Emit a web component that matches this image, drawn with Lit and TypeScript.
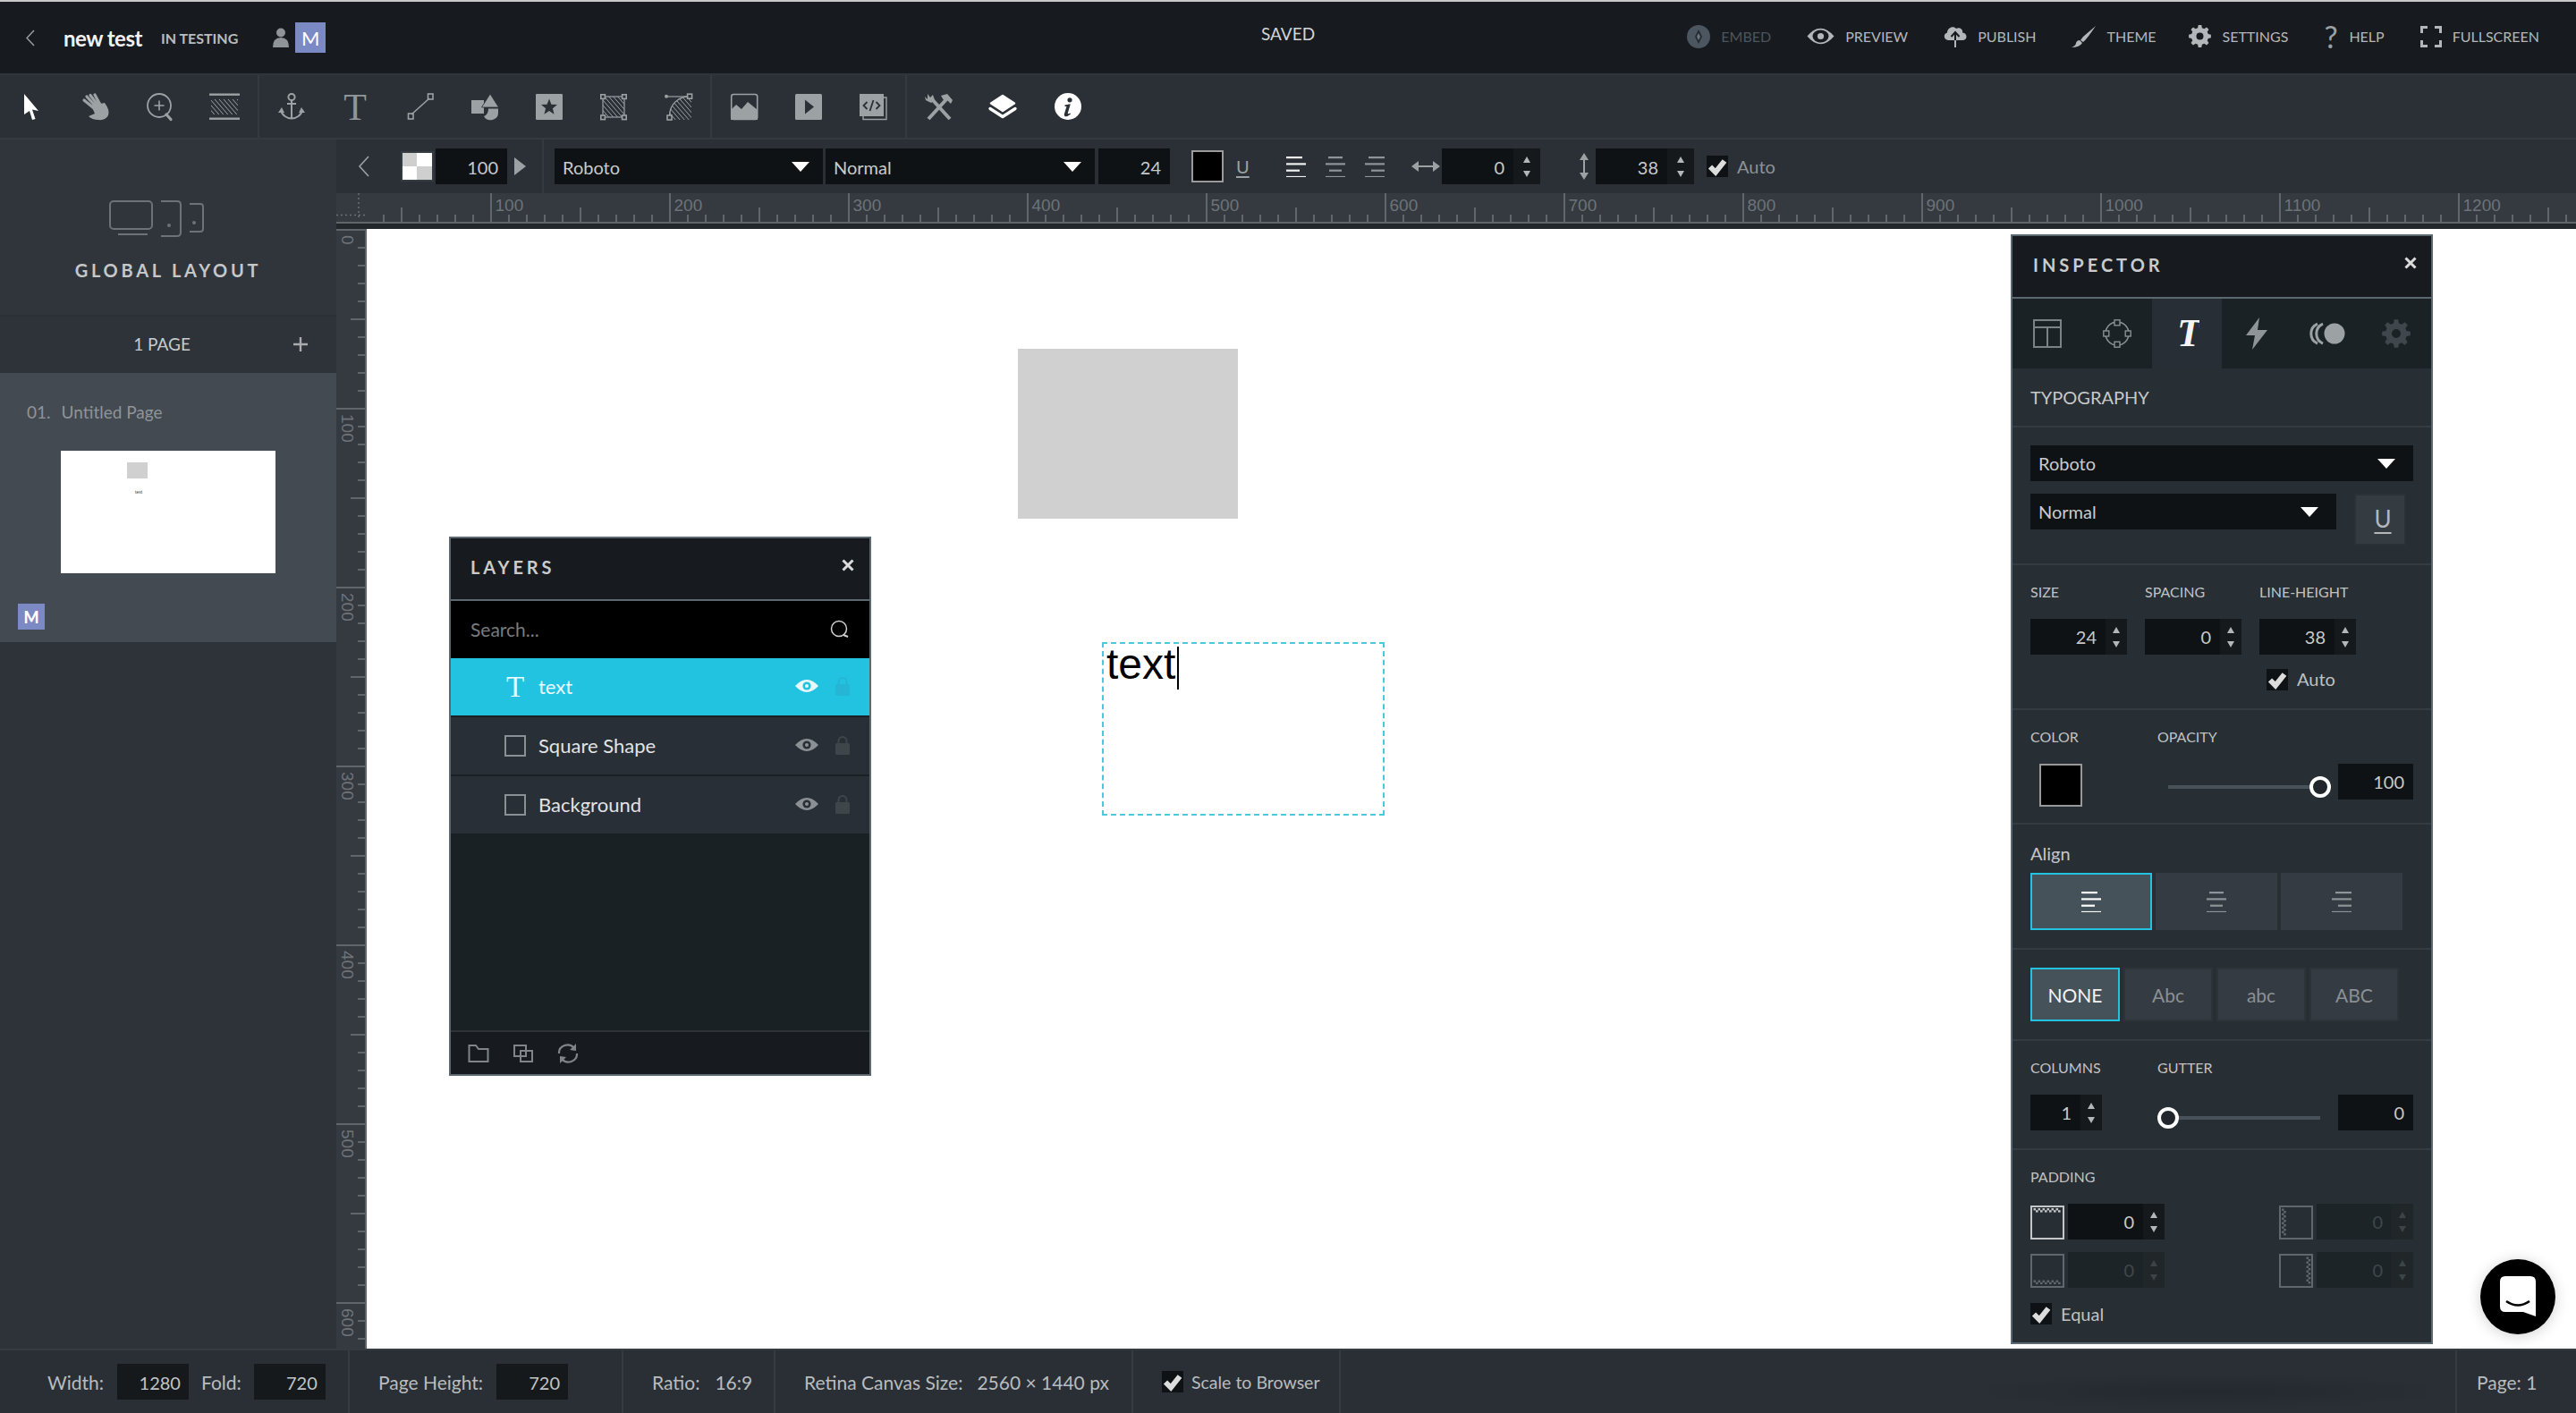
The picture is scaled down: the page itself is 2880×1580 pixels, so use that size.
import { LitElement, html, css, svg } from "lit";
import { customElement } from "lit/decorators.js";

const G = "#9ca1a4";
const DK = "#2a3036";

function gear(cx: number, cy: number, R: number, r: number, n: number, hole: number) {
  let d = "";
  const w = (Math.PI * 2) / n;
  for (let i = 0; i < n; i++) {
    const a = i * w;
    const pts: [number, number][] = [
      [a - w * 0.32, r],
      [a - w * 0.18, R],
      [a + w * 0.18, R],
      [a + w * 0.32, r],
    ];
    for (const [t, rad] of pts) {
      d += `${d ? "L" : "M"}${(cx + rad * Math.sin(t)).toFixed(2)} ${(cy - rad * Math.cos(t)).toFixed(2)}`;
    }
  }
  d += `Z M${cx + hole} ${cy} a${hole} ${hole} 0 1 0 ${-2 * hole} 0 a${hole} ${hole} 0 1 0 ${2 * hole} 0Z`;
  return d;
}

const hatch = (from: number, to: number, step: number, len: number, top: number) => {
  const out = [];
  for (let x = from; x <= to; x += step) {
    out.push(svg`<line x1=${x} y1=${top} x2=${x + len} y2=${top + len * 1.15} />`);
  }
  return out;
};

const toolIcons = [
  html`<svg class="ti" viewBox="0 0 36 32"><path d="M10 2 L26 21 L19 19.5 L22.5 30 L19 31 L16 21 L10 25Z" fill="#fff"/></svg>`,
  html`<svg class="ti" viewBox="0 0 36 32"><g stroke=${G} stroke-width="3.2" stroke-linecap="round" fill="none"><path d="M16 18 L5 9 M17 15 L8 5 M20 14 L12 3.5 M23 14 L17 3"/></g><path d="M13 15 L28 12 Q34 20 32 26 Q29 32 21 31 Q14 31 10 27 L17 24Z" fill=${G}/></svg>`,
  html`<svg class="ti" viewBox="0 0 36 32"><circle cx="17" cy="15" r="13" fill="none" stroke=${G} stroke-width="1.8"/><path d="M17 9.5 V20.5 M11.5 15 H22.5" stroke=${G} stroke-width="1.6"/><path d="M25 25 L30 30.5" stroke=${G} stroke-width="3.2" stroke-linecap="round"/></svg>`,
  html`<svg class="ti" viewBox="0 0 36 32"><rect x="1" y="1.5" width="34" height="2.4" fill=${G}/><rect x="1" y="28.5" width="34" height="2.4" fill=${G}/><g stroke=${G} stroke-width="1" clip-path="url(#hc1)">${hatch(-18, 32, 5, 18, 8)}</g><clipPath id="hc1"><rect x="3" y="8" width="30" height="17"/></clipPath></svg>`,
  html`<svg class="ti" viewBox="0 0 36 32"><g fill="none" stroke=${G} stroke-width="2"><circle cx="18" cy="5.5" r="3.6"/><path d="M18 9 V29.5 M13 13 H23"/><path d="M6 20 C7 26 13 29.5 18 29.5 C23 29.5 29 26 30 20"/></g><path d="M3 23 L7 17 L10 23Z M33 23 L29 17 L26 23Z" fill=${G}/></svg>`,
  html`<svg class="ti" viewBox="0 0 36 32"><text x="17" y="30.5" text-anchor="middle" font-family="'Liberation Serif',serif" font-size="42" fill="#90959a">T</text></svg>`,
  html`<svg class="ti" viewBox="0 0 36 32"><path d="M8 25 L28 7" stroke=${G} stroke-width="1.6"/><rect x="4.5" y="24" width="5.5" height="6" fill="none" stroke=${G} stroke-width="1.6"/><rect x="26.5" y="2" width="5.5" height="6" fill="none" stroke=${G} stroke-width="1.6"/></svg>`,
  html`<svg class="ti" viewBox="0 0 36 32"><rect x="3" y="9" width="14" height="15" fill=${G}/><path d="M15 18.5 H33 V23 A8.5 8 0 0 1 17 27 C20 26 22 23 22 18.5Z" fill=${G}/><path d="M24 2 L33.5 17 H14.5Z" fill=${G} stroke=${DK} stroke-width="0.8"/></svg>`,
  html`<svg class="ti" viewBox="0 0 36 32"><rect x="3" y="2" width="30" height="29" rx="1" fill=${G}/><path d="M18 7.5 L20.4 13.7 L27 14.1 L21.9 18.3 L23.6 24.7 L18 21.1 L12.4 24.7 L14.1 18.3 L9 14.1 L15.6 13.7Z" fill=${DK}/></svg>`,
  html`<svg class="ti" viewBox="0 0 36 32"><g stroke=${G} stroke-width="1" clip-path="url(#hc2)">${hatch(-20, 30, 5, 28, 2)}</g><clipPath id="hc2"><rect x="6" y="5" width="24" height="23"/></clipPath><rect x="6" y="5" width="24" height="23" fill="none" stroke=${G} stroke-width="1.2"/><g fill=${DK} stroke=${G} stroke-width="1.6"><rect x="3.8" y="2.8" width="4.6" height="4.6"/><rect x="27.6" y="2.8" width="4.6" height="4.6"/><rect x="3.8" y="26" width="4.6" height="4.6"/><rect x="27.6" y="26" width="4.6" height="4.6"/></g></svg>`,
  html`<svg class="ti" viewBox="0 0 36 32"><g stroke=${G} stroke-width="1" clip-path="url(#hc3)">${hatch(-10, 32, 5, 28, 2)}</g><clipPath id="hc3"><path d="M8 29 C8 14 18 5 33 5 V31 H8Z"/></clipPath><path d="M6 5 H30" stroke=${G} stroke-width="1.2"/><path d="M8.5 27 C8.5 14 18 5 30 5" fill="none" stroke=${G} stroke-width="1.4"/><circle cx="5" cy="4.8" r="2" fill=${G}/><g fill=${DK} stroke=${G} stroke-width="1.6"><rect x="28.6" y="2.2" width="5" height="5"/><rect x="6" y="26" width="5" height="5"/></g></svg>`,
  html`<svg class="ti" viewBox="0 0 36 32"><rect x="3.7" y="2.5" width="29" height="28" rx="2.5" fill="none" stroke=${G} stroke-width="1.6"/><path d="M3 31 V20 L9 14 L15 19 L22 11 L33 20 V31Z" fill=${G}/></svg>`,
  html`<svg class="ti" viewBox="0 0 36 32"><rect x="3" y="2" width="30" height="29" rx="1.5" fill=${G}/><path d="M14 8.5 L24 16.5 L14 24.5Z" fill=${DK}/></svg>`,
  html`<svg class="ti" viewBox="0 0 36 32"><path d="M30 6 H33 V30.5 H7 V27" fill="none" stroke=${G} stroke-width="1.4"/><rect x="3" y="2" width="27" height="25" fill=${G}/><path d="M11.5 11 L7.5 15 L11.5 19 M21.5 11 L25.5 15 L21.5 19 M18.5 9 L14.5 21" fill="none" stroke=${DK} stroke-width="1.8"/></svg>`,
  html`<svg class="ti" viewBox="0 0 36 32"><path d="M6 30 L28 6" stroke=${G} stroke-width="4"/><path d="M20 4 L27 2 L33 9 L31 13 L26 8 L23 9Z" fill=${G}/><path d="M30 30 L10 8" stroke=${G} stroke-width="4"/><path d="M5 2 L8 6 L11 3 L13 9 L9 12 L3 9 L2 5 L5 8Z" fill=${G}/></svg>`,
  html`<svg class="ti" viewBox="0 0 36 32"><path d="M17 4 L30 12.5 L17 21 L4 12.5Z" fill="#fff" stroke="#fff" stroke-width="2.5" stroke-linejoin="round"/><path d="M3 18.5 L17 27.5 L31 18.5" fill="none" stroke="#fff" stroke-width="3.4" stroke-linejoin="round" stroke-linecap="round"/></svg>`,
  html`<svg class="ti" viewBox="0 0 36 32"><circle cx="18" cy="16" r="15" fill="#fff"/><circle cx="20" cy="8.8" r="2.6" fill=${DK}/><path d="M14.5 14.5 L20.8 13.2 L17.8 23.5 Q17.5 25 20.5 23.4 L21 24.5 Q17 28 14.5 27 Q13.2 26 14 24 L16.5 16 L14.5 16Z" fill=${DK}/></svg>`,
];

const alignIcon = (kind: string, color: string) => {
  const rows: [number, number][] =
    kind === "l"
      ? [[0, 18], [0, 22], [0, 15], [0, 22]]
      : kind === "c"
        ? [[3, 16], [0, 22], [4, 14], [0, 22]]
        : [[4, 18], [0, 22], [7, 15], [0, 22]];
  return html`<svg class="align" viewBox="0 0 22 24">${rows.map(
    ([x, w], i) => svg`<rect x=${x} y=${1 + i * 7.3} width=${w} height="2.2" fill=${color} />`,
  )}</svg>`;
};

const caret = html`<svg class="caret" viewBox="0 0 20 11"><path d="M0 0 H20 L10 11Z" fill="#fff"/></svg>`;
const checkMark = html`<svg viewBox="0 0 24 24"><path d="M4 12.5 L10 18.5 L20 6" fill="none" stroke="#dcdcdc" stroke-width="6"/></svg>`;
const check = html`<span class="chk">${checkMark}</span>`;

const eye = (c: string, pupil: string) =>
  html`<svg class="eye" viewBox="0 0 26 16"><path d="M0 8 Q13 -6 26 8 Q13 22 0 8Z" fill=${c}/><circle cx="13" cy="8" r="4.6" fill=${pupil}/><circle cx="13" cy="8" r="2" fill=${c}/></svg>`;
const lock = (c: string) =>
  html`<svg class="lock" viewBox="0 0 16 22"><path d="M3.5 10 V6.5 A4.5 4.5 0 0 1 12.5 6.5 V10" fill="none" stroke=${c} stroke-width="2"/><rect x="0" y="9" width="16" height="13" rx="1.5" fill=${c}/></svg>`;

const num = (v: string, cls: string, spin = true) =>
  html`<div class="num ${cls}"><span class="val">${v}</span>${spin
    ? html`<span class="spin"><i class="up"></i><i class="dn"></i></span>`
    : ""}</div>`;

const padIcon = (side: string, dim: boolean) => {
  const c = dim ? "#60686e" : "#c4c6c8";
  const cells = [];
  for (let i = 0; i < 6; i++) {
    const a = 3.5 + i * 5;
    const pos = (k: number) =>
      side === "t"
        ? [a + (k % 2) * 2.5, 3 + k * 2.2]
        : side === "b"
          ? [a + (k % 2) * 2.5, 29.5 + k * 2.2]
          : side === "l"
            ? [3 + k * 2.2, a + (k % 2) * 2.5]
            : [30.5 + k * 2.2, a + (k % 2) * 2.5];
    for (let k = 0; k < 2; k++) {
      const [x, y] = pos(k);
      cells.push(svg`<rect x=${x} y=${y} width="2.6" height="2.4" fill=${c} />`);
    }
  }
  return html`<svg class="padi" viewBox="0 0 38 38"><rect x="1" y="1" width="36" height="36" fill="none" stroke=${c} stroke-width="2"/>${cells}</svg>`;
};

const topRuler = () => {
  const out = [];
  for (let i = 4; i < 128; i++) {
    const x = 349 - 410 + i * 20;
    const top = i % 10 === 0 ? 0 : i % 5 === 0 ? 16 : 24;
    out.push(svg`<line x1=${x} x2=${x} y1=${top} y2="32" />`);
    if (i % 10 === 0) {
      out.push(svg`<text class="rt" x=${x + 4.5} y="20">${i * 10}</text>`);
    }
  }
  return out;
};
const leftRuler = () => {
  const out = [];
  for (let i = 0; i < 63; i++) {
    const y = 1 + i * 20;
    const l = i % 10 === 0 ? 0 : i % 5 === 0 ? 16 : 24;
    out.push(svg`<line x1=${l} x2="32" y1=${y} y2=${y} />`);
    if (i % 10 === 0) {
      out.push(svg`<text class="rt" transform="translate(6,${y + 6}) rotate(90)">${i * 10}</text>`);
    }
  }
  return out;
};

@customElement("app-root")
export class AppRoot extends LitElement {
  static styles = css`
    :host { display: block; width: 2880px; height: 1580px; overflow: hidden; font-family: Lato, "Noto Sans", sans-serif; color: #c6c8c9; }
    * { box-sizing: border-box; }
    .app { display: flex; flex-direction: column; height: 1580px; background: #2a3036; }
    .topline { height: 2px; background: #c9c9c9; }
    .topbar { height: 82px; border-bottom: 2px solid #2e353a; background: #171b1f; display: grid; grid-template-columns: 1fr auto 1fr; align-items: center; }
    .tl { display: flex; align-items: center; padding-left: 28px; }
    .tl .back { width: 11px; height: 19px; margin-right: 32px; }
    .title { font-size: 24px; font-weight: 700; color: #f2f2f2; letter-spacing: -0.5px; }
    .status { font-size: 16px; font-weight: 700; color: #b9bcbe; margin-left: 21px; letter-spacing: 0; }
    .person { width: 18px; height: 22px; margin-left: 39px; }
    .mbadge { width: 34px; height: 34px; margin-left: 7px; background: #7b89c4; color: #fff; display: flex; align-items: center; justify-content: center; font-size: 22px; font-weight: 400; }
    .saved { font-size: 19px; color: #d2d4d5; padding-bottom: 10px; }
    .tr { display: flex; justify-content: flex-end; align-items: center; gap: 40px; padding: 0 41px 3px 0; }
    .act { display: flex; align-items: center; gap: 12px; font-size: 16px; color: #b4b7b9; white-space: nowrap; }
    .act.off { color: #4c555c; }
    .act svg { display: block; }
    .act.th { margin-right: -3px; }
    .qm { font-size: 34px; line-height: 26px; color: #9ca1a4; width: 16px; }

    .toolbar { height: 72px; border-bottom: 2px solid #333a40; display: flex; background: #2a3036; }
    .tg { display: flex; align-items: center; border-right: 2px solid #333a40; flex: none; }
    .tg1 { width: 290px; }
    .tg1 .tb:first-child { margin-left: -1px; }
    .tg2 { width: 506px; }
    .tg3 { width: 218px; }
    .tg4 { border-right: 0; }
    .tb { width: 72px; display: flex; justify-content: center; flex: none; }
    .ti { width: 36px; height: 32px; display: block; overflow: visible; }

    .main { flex: 1; display: flex; min-height: 0; }
    .side { width: 376px; flex: none; background: #2d3339; display: flex; flex-direction: column; }
    .gl { height: 198px; background: #2f353b; border-bottom: 2px solid #2a3036; display: flex; flex-direction: column; align-items: center; padding-top: 68px; }
    .devices { width: 106px; height: 42px; display: block; margin-right: 26px; }
    .gl h2 { margin: 24px 0 0; font-size: 20px; line-height: 24px; font-weight: 700; letter-spacing: 3.75px; color: #c5c7c8; }
    .pg { height: 63px; display: flex; align-items: center; justify-content: center; position: relative; font-size: 19px; color: #c8cacb; padding-right: 14px; padding-bottom: 2px; }
    .pg .plus { position: absolute; left: 328px; top: 23px; width: 16px; height: 16px; }
    .page { height: 301px; background: #434a52; padding: 29px 0 0 30px; display: flex; flex-direction: column; }
    .page .nm { font-size: 19px; line-height: 30px; color: #8f9498; display: flex; gap: 12px; }
    .thumb { width: 240px; height: 137px; background: #fff; margin: 28px 0 0 38px; position: relative; color: #333; flex: none; }
    .thumb b { position: absolute; left: 74px; top: 13px; width: 23px; height: 18px; background: #d0d0d0; }
    .thumb span { position: absolute; left: 83px; top: 43px; font: 5px/6px "Liberation Sans", sans-serif; }
    .mb2 { width: 30px; height: 29px; background: #7b89c4; color: #fff; font-size: 18px; font-weight: 900; display: flex; align-items: center; justify-content: center; margin: 34px 0 0 -10px; flex: none; }

    .work { flex: 1; min-width: 0; display: flex; flex-direction: column; }
    .fbar { height: 60px; background: #2a3036; display: flex; align-items: center; flex: none; }
    .fleft { width: 232px; height: 60px; border-right: 2px solid #333a40; display: flex; align-items: center; flex: none; }
    .chev { width: 13px; height: 24px; margin-left: 24px; }
    .chq { width: 37px; height: 34px; margin-left: 35px; display: block; }
    .num { height: 40px; background: #0e1214; display: flex; font-size: 20px; color: #c8c9ca; flex: none; }
    .val { flex: 1; text-align: right; padding-right: 10px; line-height: 42px; }
    .insp .val { line-height: 40px; }
    .spin { width: 24px; background: #15191c; display: flex; flex-direction: column; align-items: center; justify-content: center; gap: 9px; flex: none; }
    .spin i { display: block; width: 0; height: 0; border-left: 4.5px solid transparent; border-right: 4.5px solid transparent; }
    .spin .up { border-bottom: 7px solid #b4b7b9; }
    .spin .dn { border-top: 7px solid #b4b7b9; }
    .w80 { width: 80px; margin-left: 2px; }
    .w110 { width: 110px; }
    .w110 .spin { width: 30px; }
    .w80b { width: 80px; margin-left: 4px; }
    .rarrow { width: 13px; height: 20px; margin-left: 8px; }
    .sel { height: 40px; background: #0e1214; display: flex; align-items: center; justify-content: space-between; font-size: 20px; color: #c9cacb; flex: none; padding: 2px 15px 0 9px; }
    .sel1 { width: 300px; margin-left: 12px; }
    .sel2 { width: 301px; margin-left: 3px; }
    .caret { width: 20px; height: 11px; display: block; margin-top: -2px; }
    .fsw { width: 36px; height: 36px; background: #000; border: 2px solid #9a9a9a; margin-left: 24px; flex: none; }
    .u { font-size: 20px; line-height: 28px; color: #9ca1a4; text-decoration: underline; margin-left: 14px; text-underline-offset: 3px; flex: none; min-width: 16px; }
    .align { width: 22px; height: 24px; display: block; flex: none; }
    .ga1 { margin-left: 40px; }
    .ga2 { margin-left: 22px; }
    .ga3 { margin-left: 22px; }
    .hw { width: 32px; height: 14px; margin-left: 30px; flex: none; }
    .w110h { margin-left: 2px; }
    .vh { width: 14px; height: 30px; margin-left: 42px; flex: none; }
    .w110v { margin-left: 6px; }
    .chk { width: 24px; height: 24px; background: #0e1214; display: block; flex: none; }
    .chk svg { display: block; width: 24px; height: 24px; }
    .fchk { margin-left: 14px; }
    .fauto { font-size: 20px; color: #8d9296; margin-left: 10px; }

    .rrow { height: 40px; display: flex; flex: none; position: relative; }
    .rcorner { width: 34px; background: #343a40; flex: none; border-bottom: 6px solid #22272b; }
    .rcorner svg { display: block; }
    .rtop { flex: 1; height: 40px; background: #343a40; overflow: hidden; border-bottom: 6px solid #22272b; }
    .rtop svg { display: block; width: 2470px; height: 34px; border-bottom: 2px solid #5f656a; }
    .ruler { stroke: #70767b; stroke-width: 1.5; }
    .rt { font: 19px "Liberation Sans", sans-serif; fill: #6d7378; stroke: none; }
    .crow { flex: 1; display: flex; min-height: 0; }
    .rleft { width: 34px; background: #343a40; flex: none; border-right: 2px solid #5f656a; overflow: hidden; }
    .rleft svg { display: block; width: 32px; height: 1260px; }
    .canvas { flex: 1; background: #fff; position: relative; overflow: hidden; min-width: 0; }
    .shape { position: absolute; left: 728px; top: 134px; width: 246px; height: 190px; background: #d0d0d0; }
    .tbox { position: absolute; left: 822px; top: 462px; width: 316px; height: 194px; border: 2px dashed #4bc8dc; padding: 3px 0 0 3px; color: #000; }
    .tbox span { display: block; width: fit-content; border-right: 2.5px solid #000; height: 48px; font: 48px/40px "Liberation Sans", sans-serif; padding-right: 2px; }

    .panel { position: absolute; border: 2px solid #5b6870; display: flex; flex-direction: column; background: #272e34; }
    .layers { left: 92px; top: 344px; width: 472px; height: 603px; background: #1a2124; }
    .phead { height: 70px; background: #171b1f; border-bottom: 2px solid #5b6870; display: flex; align-items: center; justify-content: space-between; font-weight: 700; color: #c9cbcc; flex: none; }
    .layers .phead { padding: 0 17px 4px 22px; font-size: 20px; letter-spacing: 3.9px; }
    .x { width: 14px; height: 14px; display: block; margin-bottom: 4px; }
    .sr { height: 64px; background: #000; display: flex; align-items: center; justify-content: space-between; padding: 0 22px; font-size: 21px; color: #777b7e; flex: none; }
    .sr span { padding-bottom: 2px; }
    .sr svg { width: 22px; height: 22px; display: block; }
    .lr { height: 64px; background: #292f37; display: flex; align-items: center; margin-bottom: 2px; font-size: 22px; color: #e2e3e4; flex: none; }
    .lr.on { background: #21c3e0; color: #eefafd; }
    .lr .ic { width: 24px; height: 24px; margin-left: 60px; display: flex; flex: none; }
    .lr .ic svg { display: block; width: 24px; height: 24px; }
    .lr .tx { margin-left: 14px; flex: 1; padding-bottom: 2px; }
    .eye { width: 26px; height: 16px; margin-right: 19px; flex: none; display: block; margin-bottom: 2px; }
    .lock { width: 16px; height: 22px; margin-right: 22px; flex: none; display: block; margin-bottom: 2px; }
    .lsp { flex: 1; }
    .lf { height: 49px; background: #171b1f; border-top: 2px solid #2d3338; display: flex; align-items: center; padding: 0 0 0 19px; flex: none; gap: 26px; }
    .lf svg { display: block; height: 22px; width: 24px; }

    .insp { left: 1838px; top: 6px; width: 472px; height: 1241px; }
    .insp .phead { padding: 0 16px 4px 23px; font-size: 20px; letter-spacing: 4px; }
    .tabs { height: 78px; display: grid; grid-template-columns: repeat(6, 78px); background: #1a2225; flex: none; }
    .tab { display: flex; align-items: center; justify-content: center; }
    .tab.on { background: #272e35; }
    .tab svg { display: block; }
    .sec { border-bottom: 2px solid #343b42; padding: 20px 0 20px 20px; flex: none; }
    .sec.last { border-bottom: 0; flex: 1; }
    .typo { height: 66px; font-size: 20px; padding: 19px 0 0 20px; line-height: 26px; color: #c6c8c9; }
    .isel1 { width: 428px; }
    .isel2 { width: 342px; }
    .irow { display: flex; margin-top: 14px; align-items: flex-start; }
    .sel.is { padding: 0 20px 0 9px; }
    .sel.is .caret { margin-top: 0; }
    .ub { width: 58px; height: 58px; margin-left: 20px; background: #343b41; border: 2px solid #2b3136; font-size: 26px; text-align: center; color: #b4b7b9; text-decoration: underline; text-decoration-thickness: 2px; text-underline-offset: 5px; padding: 6px 0 0 6px; line-height: 40px; }
    .lab3 { display: grid; grid-template-columns: 108px 108px 108px; column-gap: 20px; font-size: 16px; line-height: 20px; color: #c0c2c4; }
    .g3 { margin-top: 20px; display: grid; grid-template-columns: 108px 108px 108px; column-gap: 20px; }
    .auto { display: flex; align-items: center; height: 24px; margin: 16px 0 0 264px; gap: 10px; font-size: 20px; color: #bfc1c3; }
    .auto span:last-child { line-height: 20px; padding-bottom: 2px; }
    .lab2 { display: grid; grid-template-columns: 142px 1fr; font-size: 16px; line-height: 20px; color: #c0c2c4; }
    .srow { margin-top: 20px; display: flex; align-items: flex-start; }
    .srow.tall { height: 46px; }
    .swatch { width: 48px; height: 48px; background: #000; border: 2px solid #999; margin-left: 10px; flex: none; }
    .slider { width: 194px; margin-left: 84px; height: 40px; position: relative; flex: none; }
    .sl2 { margin-left: 62px; }
    .track { position: absolute; left: 12px; width: 170px; top: 24px; height: 4px; background: #47525a; }
    .knob { position: absolute; top: 14px; width: 24px; height: 24px; border-radius: 50%; background: #20262b; border: 4.5px solid #fff; }
    .kr { left: 170px; }
    .kl { left: 0; }
    .w84r { width: 84px; margin-left: 8px; }
    .alab { font-size: 20px; line-height: 24px; color: #c4c6c8; }
    .abtns { display: flex; gap: 4px; margin-top: 10px; }
    .abtn { width: 136px; height: 64px; background: #343b42; display: flex; align-items: center; justify-content: center; }
    .abtn.on { background: #46525a; border: 2px solid #21c3e0; }
    .cbtns { display: flex; gap: 4px; }
    .cb { width: 100px; height: 60px; background: #343b42; border: 2px solid #2e3339; display: flex; align-items: center; justify-content: center; font-size: 21px; color: #8b9094; padding-top: 1px; }
    .cb.on { background: #46525a; border: 2px solid #21c3e0; color: #f2f3f3; }
    .w80c { width: 80px; }
    .prow { display: flex; align-items: center; margin-top: 14px; height: 40px; }
    .prow.first { margin-top: 20px; }
    .padi { width: 38px; height: 38px; display: block; flex: none; margin-top: 2px; }
    .pnum { width: 108px; margin-left: 4px; }
    .pnum2 { margin-left: 128px; }
    .num.dim { background: #1d2427; color: #3f474c; }
    .dim .spin { background: #212729; }
    .dim .spin .up { border-bottom-color: #3c4448; }
    .dim .spin .dn { border-top-color: #3c4448; }
    .eq { display: flex; align-items: center; gap: 10px; margin-top: 17px; font-size: 20px; color: #bfc1c3; }

    .chat { position: absolute; left: 2363px; top: 1152px; width: 84px; height: 84px; border-radius: 50%; background: #000; box-shadow: 0 2px 16px rgba(0,0,0,.18); }
    .chat svg { display: block; }

    .bbar { height: 72px; border-top: 2px solid #343b41; background: #292f35 radial-gradient(ellipse 280px 20px at 2470px 46px, rgba(20,24,26,.28), transparent); display: flex; flex: none; font-size: 21px; color: #b9bcbe; align-items: stretch; }
    .bs { display: flex; align-items: center; border-right: 2px solid #343b41; flex: none; white-space: nowrap; }
    .bs1 { width: 391px; padding-left: 53px; }
    .bs2 { width: 306px; padding-left: 32px; }
    .bs3 { width: 170px; padding-left: 32px; }
    .bs4 { width: 400px; padding-left: 32px; }
    .bs5 { width: 232px; padding-left: 32px; }
    .bsp { flex: 1; }
    .bs6 { width: 135px; border-right: 0; border-left: 2px solid #343b41; padding-left: 22px; }
    .bi { width: 80px; height: 40px; background: #15191c; text-align: right; padding-right: 9px; line-height: 42px; font-size: 20px; color: #c2c4c5; flex: none; }
    .bi1 { margin-left: 15px; }
    .bi2 { margin-left: 14px; }
    .bi3 { margin-left: 15px; }
    .fl { margin-left: 14px; }
    .rv { margin-left: 17px; }
    .rc { margin-left: 16px; }
    .stb { margin-left: 9px; font-size: 19.5px; }
  `;

  render() {
    return html`<div class="app">
      <div class="topline"></div>
      <div class="topbar">
        <div class="tl">
          <svg class="back" viewBox="0 0 11 19"><path d="M10 1 L2 9.5 L10 18" fill="none" stroke="#9ca1a4" stroke-width="1.4"/></svg>
          <span class="title">new test</span>
          <span class="status">IN TESTING</span>
          <svg class="person" viewBox="0 0 18 22"><circle cx="9" cy="5.5" r="5" fill="#8f9498"/><path d="M0 22 Q0 11 9 11 Q18 11 18 22Z" fill="#8f9498"/></svg>
          <span class="mbadge">M</span>
        </div>
        <div class="saved">SAVED</div>
        <div class="tr">
          <div class="act off">
            <svg width="26" height="26" viewBox="0 0 26 26"><circle cx="13" cy="13" r="13" fill="#4b5660"/><path d="M13 5 L17 13 L13 21 L9 13Z" fill="#242a30"/><path d="M13 9 L15 13 L13 17 L11 13Z" fill="#6a7680"/></svg>
            <span>EMBED</span>
          </div>
          <div class="act">
            <svg width="31" height="21" viewBox="0 0 31 21"><path d="M0.5 10.5 Q15.5 -7 30.5 10.5 Q15.5 28 0.5 10.5Z" fill="#b4b7b9"/><ellipse cx="15.5" cy="10.5" rx="9" ry="7" fill="#171b1f"/><circle cx="15.5" cy="10.5" r="3.6" fill="#b4b7b9"/></svg>
            <span>PREVIEW</span>
          </div>
          <div class="act">
            <svg width="26" height="25" viewBox="0 0 26 25"><path d="M6 17 C0 17 -1 10 4 8.5 C4 3 11 0 14 4 C18 2 22 5 21 8.5 C27 9 27 17 21 17Z" fill="#b4b7b9"/><path d="M13 25 V9 M8.5 13 L13 8 L17.5 13" fill="none" stroke="#171b1f" stroke-width="2"/><path d="M13 25 V17" stroke="#b4b7b9" stroke-width="2"/></svg>
            <span>PUBLISH</span>
          </div>
          <div class="act th">
            <svg width="27" height="24" viewBox="0 0 27 24"><path d="M27 0 L13 12 L10 16 L13 18 Q17 15 27 0Z" fill="#b4b7b9"/><path d="M9 16 L12 19 Q9 24 0 24 Q5 22 5 19 Q6 16 9 16Z" fill="#b4b7b9"/></svg>
            <span>THEME</span>
          </div>
          <div class="act">
            <svg width="25" height="25" viewBox="0 0 25 25"><path fill-rule="evenodd" d=${gear(12.5, 12.5, 12.5, 9.6, 8, 4)} fill="#b4b7b9"/></svg>
            <span>SETTINGS</span>
          </div>
          <div class="act">
            <span class="qm">?</span>
            <span>HELP</span>
          </div>
          <div class="act">
            <svg width="24" height="24" viewBox="0 0 24 24"><path d="M1.5 8 V1.5 H8 M16 1.5 H22.5 V8 M22.5 16 V22.5 H16 M8 22.5 H1.5 V16" fill="none" stroke="#b4b7b9" stroke-width="3"/></svg>
            <span>FULLSCREEN</span>
          </div>
        </div>
      </div>

      <div class="toolbar">
        <div class="tg tg1">${toolIcons.slice(0, 4).map((i) => html`<div class="tb">${i}</div>`)}</div>
        <div class="tg tg2">${toolIcons.slice(4, 11).map((i) => html`<div class="tb">${i}</div>`)}</div>
        <div class="tg tg3">${toolIcons.slice(11, 14).map((i) => html`<div class="tb">${i}</div>`)}</div>
        <div class="tg tg4">${toolIcons.slice(14).map((i) => html`<div class="tb">${i}</div>`)}</div>
      </div>

      <div class="main">
        <aside class="side">
          <div class="gl">
            <svg class="devices" viewBox="0 0 106 42"><g fill="none" stroke="#6b7278" stroke-width="2"><rect x="1" y="1" width="47" height="31" rx="4"/><path d="M10 38 H43" stroke-width="2"/><path d="M58 1 H76 Q80 1 80 5 V36 Q80 40 76 40 H58"/><path d="M90 4 H102 Q105 4 105 7 V32 Q105 35 102 35 H90"/></g><circle cx="67" cy="28" r="2" fill="#6b7278"/><circle cx="95" cy="25" r="2" fill="#6b7278"/></svg>
            <h2>GLOBAL LAYOUT</h2>
          </div>
          <div class="pg">1 PAGE<svg class="plus" viewBox="0 0 16 16"><path d="M8 0 V16 M0 8 H16" stroke="#a8acaf" stroke-width="2.4"/></svg></div>
          <div class="page">
            <div class="nm"><span>01.</span><span>Untitled Page</span></div>
            <div class="thumb"><b></b><span>text</span></div>
            <div class="mb2">M</div>
          </div>
        </aside>
        <div class="work">
          <div class="fbar">
            <div class="fleft">
              <svg class="chev" viewBox="0 0 13 24"><path d="M12 1 L2 12 L12 23" fill="none" stroke="#9ca1a4" stroke-width="1.6"/></svg>
              <svg class="chq" viewBox="0 0 37 34"><rect width="37" height="34" fill="#343b41"/><rect x="2" y="2" width="16" height="15" fill="#cfcfcf"/><rect x="18" y="2" width="17" height="15" fill="#fff"/><rect x="2" y="17" width="16" height="15" fill="#fff"/><rect x="18" y="17" width="17" height="15" fill="#cfcfcf"/></svg>
              ${num("100", "w80", false)}
              <svg class="rarrow" viewBox="0 0 13 20"><path d="M0 0 L13 10 L0 20Z" fill="#9ca1a4"/></svg>
            </div>
            <div class="sel sel1"><span>Roboto</span>${caret}</div>
            <div class="sel sel2"><span>Normal</span>${caret}</div>
            ${num("24", "w80b", false)}
            <div class="fsw"></div>
            <span class="u">U</span>
            <span class="ga1">${alignIcon("l", "#f0f0f0")}</span>
            <span class="ga2">${alignIcon("c", "#8f9498")}</span>
            <span class="ga3">${alignIcon("r", "#8f9498")}</span>
            <svg class="hw" viewBox="0 0 32 14"><path d="M6 7 H26" stroke="#9ca1a4" stroke-width="2"/><path d="M0 7 L8 1 V13Z M32 7 L24 1 V13Z" fill="#9ca1a4"/></svg>
            ${num("0", "w110 w110h")}
            <svg class="vh" viewBox="0 0 14 30"><path d="M7 5 V25" stroke="#9ca1a4" stroke-width="2"/><path d="M7 0 L12 8 H2Z M7 30 L12 22 H2Z" fill="#9ca1a4"/></svg>
            ${num("38", "w110 w110v")}
            <span class="chk fchk">${checkMark}</span>
            <span class="fauto">Auto</span>
          </div>
          <div class="rrow">
            <div class="rcorner"><svg width="34" height="34" viewBox="0 0 34 34"><path d="M25 0 V30 M0 24.5 H32" stroke="#6a7176" stroke-width="1.5" stroke-dasharray="2 3"/><path d="M0 33 H34" stroke="#5f656a" stroke-width="2"/></svg></div>
            <div class="rtop"><svg class="ruler" viewBox="0 0 2470 32">${topRuler()}</svg></div>
          </div>
          <div class="crow">
            <div class="rleft"><svg class="ruler" viewBox="0 0 32 1260">${leftRuler()}</svg></div>
            <div class="canvas">
              <div class="shape"></div>
              <div class="tbox"><span>text</span></div>

              <div class="panel layers">
                <div class="phead"><span>LAYERS</span><svg class="x" viewBox="0 0 14 14"><path d="M1.5 1.5 L12.5 12.5 M12.5 1.5 L1.5 12.5" stroke="#dcdcdc" stroke-width="3"/></svg></div>
                <div class="sr"><span>Search...</span><svg viewBox="0 0 22 22"><circle cx="10" cy="10" r="8.5" fill="none" stroke="#d0d0d0" stroke-width="1.5"/><path d="M15 17 L20 19" stroke="#d0d0d0" stroke-width="2"/></svg></div>
                <div class="lr on">
                  <span class="ic"><svg viewBox="0 0 24 24"><text x="12" y="23" text-anchor="middle" font-family="'Liberation Serif',serif" font-size="33" fill="#eefafd">T</text></svg></span>
                  <span class="tx">text</span>
                  ${eye("#e8f8fb", "#21c3e0")}${lock("#25b6d6")}
                </div>
                <div class="lr">
                  <span class="ic"><svg viewBox="0 0 24 24"><rect x="1" y="1" width="22" height="22" fill="none" stroke="#8b9094" stroke-width="2"/></svg></span>
                  <span class="tx">Square Shape</span>
                  ${eye("#8b9094", "#292f37")}${lock("#3e454b")}
                </div>
                <div class="lr">
                  <span class="ic"><svg viewBox="0 0 24 24"><rect x="1" y="1" width="22" height="22" fill="none" stroke="#8b9094" stroke-width="2"/></svg></span>
                  <span class="tx">Background</span>
                  ${eye("#8b9094", "#292f37")}${lock("#3e454b")}
                </div>
                <div class="lsp"></div>
                <div class="lf">
                  <svg viewBox="0 0 24 22"><path d="M1.5 20 V2 H9 L12 6 H22.5 V20Z" fill="none" stroke="#7f8589" stroke-width="2"/></svg>
                  <svg viewBox="0 0 24 22"><g fill="none" stroke="#7f8589" stroke-width="2"><rect x="2" y="2" width="13" height="12"/><rect x="9" y="8" width="13" height="12"/></g></svg>
                  <svg viewBox="0 0 24 22"><g fill="none" stroke="#7f8589" stroke-width="2.2"><path d="M2 11 A9.5 9 0 0 1 19 5"/><path d="M22 11 A9.5 9 0 0 1 5 17"/></g><path d="M21 0 L21 8 L14 7Z M3 22 L3 14 L10 15Z" fill="#7f8589"/></svg>
                </div>
              </div>

              <div class="panel insp">
                <div class="phead"><span>INSPECTOR</span><svg class="x" viewBox="0 0 14 14"><path d="M1.5 1.5 L12.5 12.5 M12.5 1.5 L1.5 12.5" stroke="#dcdcdc" stroke-width="3"/></svg></div>
                <div class="tabs">
                  <div class="tab"><svg width="32" height="32" viewBox="0 0 32 32"><path d="M1 1 H31 V31 H1Z M1 9 H31 M16 9 V31" fill="none" stroke="#7b8388" stroke-width="2"/></svg></div>
                  <div class="tab"><svg width="32" height="32" viewBox="0 0 32 32"><circle cx="16" cy="16" r="13" fill="none" stroke="#8a9095" stroke-width="1.6"/><g fill="#1a2225" stroke="#8a9095" stroke-width="1.4"><rect x="13" y="0.8" width="6" height="6"/><rect x="13" y="25.2" width="6" height="6"/><rect x="0.8" y="13" width="6" height="6"/><rect x="25.2" y="13" width="6" height="6"/></g></svg></div>
                  <div class="tab on"><svg width="28" height="32" viewBox="0 0 28 32"><text x="16.5" y="29.5" text-anchor="middle" font-family="'Liberation Serif',serif" font-size="44" font-weight="700" font-style="italic" fill="#f4f4f4">T</text></svg></div>
                  <div class="tab"><svg width="24" height="36" viewBox="0 0 24 36"><path d="M15 0 L0 20 H10 L7 36 L24 14 H13Z" fill="#8f9498"/></svg></div>
                  <div class="tab"><svg width="44" height="26" viewBox="0 0 44 26"><g fill="none" stroke="#9ca1a4" stroke-width="3"><path d="M12 2 A12 12 0 0 0 12 24"/><path d="M18 2 A12 12 0 0 0 18 24"/></g><circle cx="31" cy="13" r="13" fill="#1a2225"/><circle cx="31" cy="13" r="11.5" fill="#9ca1a4"/></svg></div>
                  <div class="tab"><svg width="32" height="32" viewBox="0 0 32 32"><path fill-rule="evenodd" d=${gear(16, 16, 16, 12, 8, 5)} fill="#40474c"/></svg></div>
                </div>
                <div class="sec typo">TYPOGRAPHY</div>
                <div class="sec">
                  <div class="sel is isel1"><span>Roboto</span>${caret}</div>
                  <div class="irow">
                    <div class="sel is isel2"><span>Normal</span>${caret}</div>
                    <div class="ub">U</div>
                  </div>
                </div>
                <div class="sec">
                  <div class="lab3"><span>SIZE</span><span>SPACING</span><span>LINE-HEIGHT</span></div>
                  <div class="g3">${num("24", "")}${num("0", "")}${num("38", "")}</div>
                  <div class="auto">${check}<span>Auto</span></div>
                </div>
                <div class="sec">
                  <div class="lab2"><span>COLOR</span><span>OPACITY</span></div>
                  <div class="srow tall">
                    <div class="swatch"></div>
                    <div class="slider"><div class="track"></div><div class="knob kr"></div></div>
                    ${num("100", "w84r", false)}
                  </div>
                </div>
                <div class="sec">
                  <div class="alab">Align</div>
                  <div class="abtns">
                    <div class="abtn on">${alignIcon("l", "#ffffff")}</div>
                    <div class="abtn">${alignIcon("c", "#8f9498")}</div>
                    <div class="abtn">${alignIcon("r", "#8f9498")}</div>
                  </div>
                </div>
                <div class="sec">
                  <div class="cbtns">
                    <div class="cb on">NONE</div><div class="cb">Abc</div><div class="cb">abc</div><div class="cb">ABC</div>
                  </div>
                </div>
                <div class="sec">
                  <div class="lab2"><span>COLUMNS</span><span>GUTTER</span></div>
                  <div class="srow">
                    ${num("1", "w80c")}
                    <div class="slider sl2"><div class="track"></div><div class="knob kl"></div></div>
                    ${num("0", "w84r", false)}
                  </div>
                </div>
                <div class="sec last">
                  <div class="lab2"><span>PADDING</span></div>
                  <div class="prow first">
                    ${padIcon("t", false)}${num("0", "pnum")}
                    <span class="pnum2">${padIcon("l", true)}</span>${num("0", "pnum dim")}
                  </div>
                  <div class="prow">
                    ${padIcon("b", true)}${num("0", "pnum dim")}
                    <span class="pnum2">${padIcon("r", true)}</span>${num("0", "pnum dim")}
                  </div>
                  <div class="eq">${check}<span>Equal</span></div>
                </div>
              </div>

              <div class="chat"><svg width="84" height="84" viewBox="0 0 84 84"><path d="M28 19 H56 Q62 19 62 25 V64 L48 59 H28 Q22 59 22 53 V25 Q22 19 28 19Z" fill="#fff"/><path d="M29 47 Q42 56 55 47" fill="none" stroke="#000" stroke-width="2.6"/></svg></div>
            </div>
          </div>
        </div>
      </div>

      <div class="bbar">
        <div class="bs bs1"><span>Width:</span><span class="bi bi1">1280</span><span class="fl">Fold:</span><span class="bi bi2">720</span></div>
        <div class="bs bs2"><span>Page Height:</span><span class="bi bi3">720</span></div>
        <div class="bs bs3"><span>Ratio:</span><span class="rv">16:9</span></div>
        <div class="bs bs4"><span>Retina Canvas Size:</span><span class="rc">2560 × 1440 px</span></div>
        <div class="bs bs5">${check}<span class="stb">Scale to Browser</span></div>
        <div class="bsp"></div>
        <div class="bs bs6">Page: 1</div>
      </div>
    </div>`;
  }
}
